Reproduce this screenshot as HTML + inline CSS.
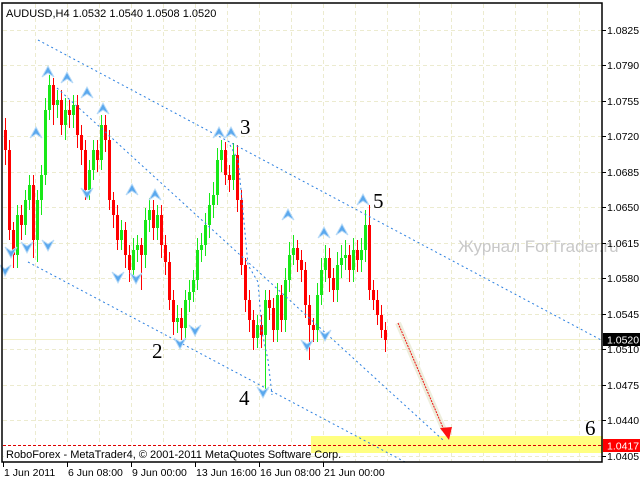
<!DOCTYPE html>
<html><head><meta charset="utf-8"><style>
html,body{margin:0;padding:0;background:#fff;width:640px;height:480px;overflow:hidden}
svg{display:block}
text{font-family:"Liberation Sans",sans-serif}
.sf{font-family:"Liberation Serif",serif;font-size:21px}
</style></head><body>
<svg width="640" height="480" xmlns="http://www.w3.org/2000/svg">
<rect width="640" height="480" fill="#fff"/>
<g stroke="#ecebcf" stroke-dasharray="4,3">
<path d="M3,30.5H602M3,65.5H602M3,101.5H602M3,136.5H602M3,172.5H602M3,207.5H602M3,243.5H602M3,278.5H602M3,314.5H602M3,349.5H602M3,385.5H602M3,420.5H602M3,456.5H602"/>
<path d="M35.5,4V461M67.5,4V461M99.5,4V461M131.5,4V461M163.5,4V461M195.5,4V461M227.5,4V461M259.5,4V461M291.5,4V461M323.5,4V461M355.5,4V461M387.5,4V461M419.5,4V461M451.5,4V461M483.5,4V461M515.5,4V461M547.5,4V461M579.5,4V461"/>
</g>
<rect x="311" y="436" width="292" height="17" fill="#ffff80"/>
<line x1="3" y1="339.5" x2="602" y2="339.5" stroke="#f2f0cc"/>
<!-- green candles -->
<path stroke="#18e818" fill="none" d="M17.5,205V268M25.5,190V235M29.5,175V210M37.5,190V262M41.5,165V215M45.5,98V185M49.5,75V120M57.5,90V118M65.5,98V140M73.5,95V128M89.5,160V200M93.5,140V180M101.5,115V170M121.5,220V250M133.5,238V280M137.5,235V262M145.5,208V268M149.5,198V232M157.5,205V240M177.5,305V333M185.5,290V340M189.5,280V312M193.5,270V302M197.5,238V290M201.5,233V262M205.5,213V256M209.5,193V238M213.5,182V218M217.5,148V205M221.5,140V172M233.5,143V190M257.5,315V348M265.5,290V390M277.5,283V342M285.5,268V332M289.5,242V292M293.5,235V265M317.5,283V342M321.5,258V305M325.5,245V282M337.5,252V302M341.5,245V278M345.5,240V270M353.5,238V282M361.5,238V272M365.5,210V262"/>
<path fill="#18e818" d="M16,215h3V255h-3zM24,200h3V225h-3zM28,185h3V200h-3zM36,200h3V240h-3zM40,175h3V200h-3zM44,110h3V175h-3zM48,85h3V110h-3zM56,100h3V105h-3zM64,110h3V125h-3zM72,105h3V115h-3zM88,170h3V190h-3zM92,150h3V170h-3zM100,125h3V160h-3zM120,230h3V240h-3zM132,250h3V270h-3zM136,245h3V250h-3zM144,220h3V255h-3zM148,210h3V220h-3zM156,215h3V228h-3zM176,318h3V322h-3zM184,300h3V328h-3zM188,292h3V300h-3zM192,280h3V292h-3zM196,250h3V280h-3zM200,245h3V250h-3zM204,225h3V245h-3zM208,205h3V225h-3zM212,195h3V205h-3zM216,160h3V195h-3zM220,150h3V160h-3zM232,155h3V180h-3zM256,325h3V338h-3zM264,300h3V335h-3zM276,295h3V330h-3zM284,280h3V320h-3zM288,255h3V280h-3zM292,248h3V255h-3zM316,295h3V330h-3zM320,270h3V295h-3zM324,258h3V270h-3zM336,265h3V290h-3zM340,258h3V265h-3zM344,255h3V258h-3zM352,250h3V270h-3zM360,250h3V260h-3zM364,225h3V250h-3z"/>
<!-- red candles -->
<path stroke="#ff0000" fill="none" d="M5.5,118V165M9.5,140V240M13.5,222V268M21.5,205V240M33.5,175V258M53.5,78V125M61.5,90V135M69.5,100V128M77.5,95V148M81.5,125V165M85.5,140V200M97.5,140V172M105.5,115V152M109.5,130V210M113.5,192V228M117.5,205V250M125.5,222V268M129.5,245V282M141.5,238V290M153.5,200V240M161.5,205V258M165.5,235V275M169.5,252V310M173.5,290V335M181.5,308V340M225.5,142V185M229.5,165V192M237.5,145V212M241.5,190V275M245.5,258V312M249.5,290V332M253.5,310V350M261.5,315V348M269.5,290V320M273.5,298V342M281.5,285V332M297.5,240V272M301.5,250V282M305.5,262V318M309.5,295V360M313.5,318V342M329.5,248V292M333.5,268V302M349.5,245V282M357.5,240V272M369.5,205V300M373.5,280V310M377.5,290V325M381.5,305V338M385.5,322V352"/>
<path fill="#ff0000" d="M4,130h3V150h-3zM8,150h3V230h-3zM12,230h3V255h-3zM20,215h3V225h-3zM32,185h3V240h-3zM52,85h3V105h-3zM60,100h3V125h-3zM68,110h3V115h-3zM76,105h3V135h-3zM80,135h3V150h-3zM84,150h3V190h-3zM96,150h3V160h-3zM104,125h3V140h-3zM108,140h3V200h-3zM112,200h3V215h-3zM116,215h3V240h-3zM124,230h3V255h-3zM128,255h3V270h-3zM140,245h3V255h-3zM152,210h3V228h-3zM160,215h3V245h-3zM164,245h3V262h-3zM168,262h3V300h-3zM172,300h3V322h-3zM180,318h3V328h-3zM224,150h3V175h-3zM228,175h3V180h-3zM236,155h3V200h-3zM240,200h3V265h-3zM244,265h3V300h-3zM248,300h3V320h-3zM252,320h3V338h-3zM260,325h3V335h-3zM268,300h3V308h-3zM272,308h3V330h-3zM280,295h3V320h-3zM296,248h3V260h-3zM300,260h3V270h-3zM304,270h3V305h-3zM308,305h3V325h-3zM312,325h3V330h-3zM328,258h3V278h-3zM332,278h3V290h-3zM348,255h3V270h-3zM356,250h3V260h-3zM368,225h3V290h-3zM372,290h3V300h-3zM376,300h3V315h-3zM380,315h3V330h-3zM384,330h3V340h-3z"/>
<g stroke="#2a7fe0" stroke-width="1" stroke-dasharray="2,3" fill="none">
<line x1="38" y1="40" x2="603" y2="341"/>
<line x1="57" y1="88" x2="443" y2="440"/>
<line x1="28" y1="262" x2="405" y2="462"/>
<polyline points="230,145 238,160 242,200 248,265 258,282 262,332 268,360 272,395"/>
</g>
<g fill="#5aa8ee" stroke="#b8daf7" stroke-width="1">
<path d="M42,77L48,66L54,77L48,73Z"/><path d="M61,83L67,72L73,83L67,79Z"/><path d="M81,98L87,87L93,98L87,94Z"/><path d="M97,114L103,103L109,114L103,110Z"/><path d="M30,138L36,127L42,138L36,134Z"/><path d="M126,195L132,184L138,195L132,191Z"/><path d="M149,200L155,189L161,200L155,196Z"/><path d="M213,138L219,127L225,138L219,134Z"/><path d="M225,138L231,127L237,138L231,134Z"/><path d="M282,220L288,209L294,220L288,216Z"/><path d="M318,238L324,227L330,238L324,234Z"/><path d="M336,235L342,224L348,235L342,231Z"/><path d="M357,205L363,194L369,205L363,201Z"/>
<path d="M5,247L11,258L17,247L11,251Z"/><path d="M21,242L27,253L33,242L27,246Z"/><path d="M42,240L48,251L54,240L48,244Z"/><path d="M81,188L87,199L93,188L87,192Z"/><path d="M112,272L118,283L124,272L118,276Z"/><path d="M130,273L136,284L142,273L136,277Z"/><path d="M174,338L180,349L186,338L180,342Z"/><path d="M189,325L195,336L201,325L195,329Z"/><path d="M257,387L263,398L269,387L263,391Z"/><path d="M301,340L307,351L313,340L307,344Z"/><path d="M319,330L325,341L331,330L325,334Z"/><path d="M0,265L5,276L11,265L5,269Z"/>
</g>
<line x1="398" y1="323" x2="444" y2="430" stroke="#eeeedd" stroke-width="6"/>
<line x1="398" y1="323" x2="444" y2="430" stroke="#ee1111" stroke-width="1" stroke-dasharray="2,1"/>
<polygon points="449,440 440,428 452,427" fill="#ff1010"/>
<line x1="3" y1="445.5" x2="602" y2="445.5" stroke="#dd0000" stroke-dasharray="3,2"/>
<rect x="4" y="446" width="306" height="15" fill="#fff"/>
<text x="6" y="458" font-size="11" fill="#000">RoboForex - MetaTrader4, © 2001-2011 MetaQuotes Software Corp.</text>
<text x="458" y="252" font-size="17" fill="#c8c8c8">Журнал ForTrader.ru</text>
<text class="sf" x="152" y="358">2</text>
<text class="sf" x="240" y="134">3</text>
<text class="sf" x="239" y="405">4</text>
<text class="sf" x="373" y="208">5</text>
<text class="sf" x="585" y="435">6</text>
<rect x="2" y="3" width="600" height="459" fill="none" stroke="#000" stroke-width="1.5"/>
<path stroke="#000" d="M602,30.5h4M602,65.5h4M602,101.5h4M602,136.5h4M602,172.5h4M602,207.5h4M602,243.5h4M602,278.5h4M602,314.5h4M602,349.5h4M602,385.5h4M602,420.5h4M602,456.5h4M3.5,462v5M67.5,462v5M131.5,462v5M195.5,462v5M259.5,462v5M323.5,462v5"/>
<g font-size="10.5" fill="#000">
<text x="607" y="34">1.0825</text><text x="607" y="69">1.0790</text><text x="607" y="105">1.0755</text><text x="607" y="140">1.0720</text><text x="607" y="176">1.0685</text><text x="607" y="211">1.0650</text><text x="607" y="247">1.0615</text><text x="607" y="282">1.0580</text><text x="607" y="318">1.0545</text><text x="607" y="353">1.0510</text><text x="607" y="389">1.0475</text><text x="607" y="424">1.0440</text><text x="607" y="460">1.0405</text>
<text x="4" y="476">1 Jun 2011</text><text x="68" y="476">6 Jun 08:00</text><text x="132" y="476">9 Jun 00:00</text><text x="196" y="476">13 Jun 16:00</text><text x="260" y="476">16 Jun 08:00</text><text x="324" y="476">21 Jun 00:00</text>
</g>
<text x="6" y="17" font-size="11" fill="#000">AUDUSD,H4  1.0532 1.0540 1.0508 1.0520</text>
<rect x="603" y="333" width="37" height="13" fill="#000"/>
<text x="607" y="343.5" font-size="10.5" fill="#fff">1.0520</text>
<rect x="603" y="439" width="37" height="13" fill="#f00"/>
<text x="607" y="449.5" font-size="10.5" fill="#fff">1.0417</text>
</svg>
</body></html>
